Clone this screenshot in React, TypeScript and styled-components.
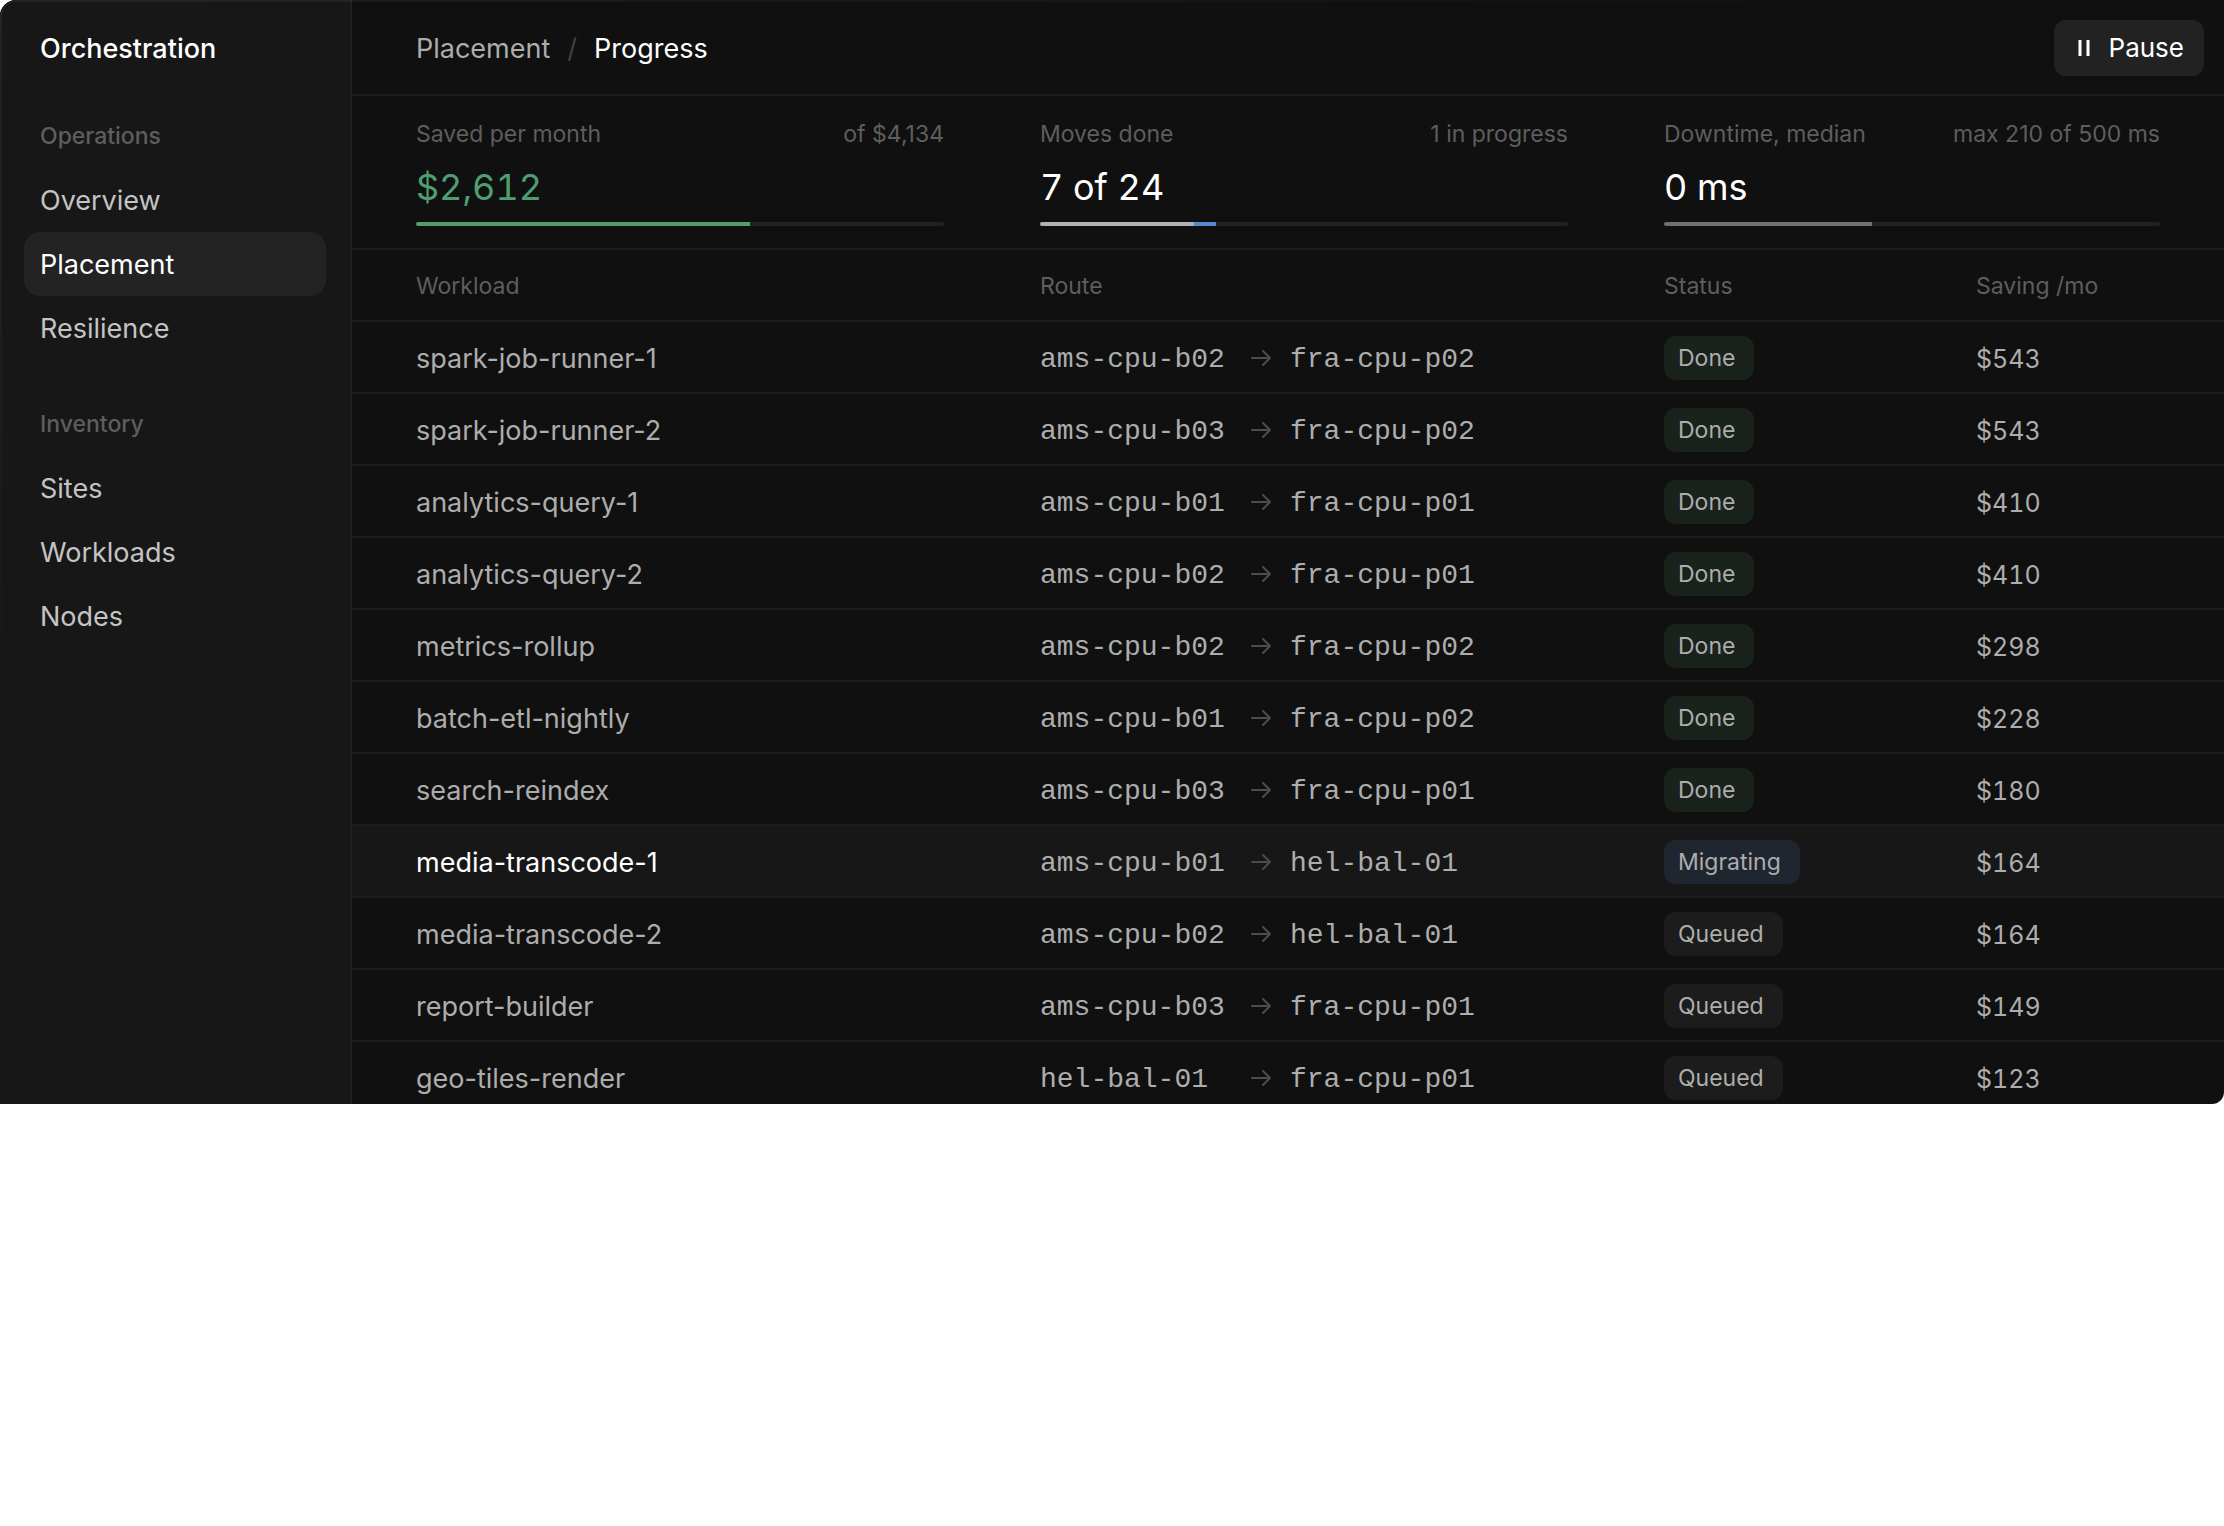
import React from "react";
import styled, { createGlobalStyle } from "styled-components";

const color = {
  main: "#101010",
  side: "#171717",
  raised: "#232323",
  line: "#1c1c1c",
  white: "#ffffff",
  nav: "#c4c4c4",
  text: "#adadad",
  muted: "#5e5e5e",
  green: "#4f9e70",
  blue: "#5b87d0",
};

const sans = `Inter, "Liberation Sans", sans-serif`;
const mono = `"Liberation Mono", monospace`;

const GlobalStyle = createGlobalStyle`
  *, *::before, *::after { box-sizing: border-box; }
  body { margin: 0; background: #ffffff; font-family: ${sans}; -webkit-font-smoothing: antialiased; }
`;

const Window = styled.div`
  position: relative;
  display: flex;
  height: 1104px;
  overflow: hidden;
  border-radius: 16px 0 12px 0;
  background: ${color.main};
  color: ${color.text};
  font-size: 27px;
  line-height: 32px;

  &::after {
    content: "";
    position: absolute;
    inset: 0;
    border-radius: inherit;
    border: 2px solid rgba(255, 255, 255, 0.06);
    mask-image: linear-gradient(160deg, #000, transparent 40%);
    pointer-events: none;
  }
`;

const Sidebar = styled.nav`
  flex: 0 0 352px;
  padding: 0 24px;
  background: ${color.side};
  border-right: 2px solid #1f1f1f;
`;

const Brand = styled.div`
  height: 96px;
  padding: 2px 16px 0;
  display: flex;
  align-items: center;
  color: ${color.white};
  font-weight: 500;
`;

const NavGroup = styled.section`
  padding: 8px 0 24px;
`;

const NavHeading = styled.h2`
  display: flex;
  align-items: center;
  height: 64px;
  margin: 0;
  padding: 0 16px;
  font-size: 23px;
  font-weight: 500;
  color: ${color.muted};
`;

const NavLink = styled.a<{ $active?: boolean }>`
  display: flex;
  align-items: center;
  height: 64px;
  padding: 2px 16px 0;
  border-radius: 16px;
  text-decoration: none;
  color: ${(p) => (p.$active ? color.white : color.nav)};
  background: ${(p) => (p.$active ? color.raised : "transparent")};
`;

const Main = styled.main`
  flex: 1;
  min-width: 0;
`;

const Header = styled.header`
  display: flex;
  align-items: center;
  justify-content: space-between;
  height: 96px;
  padding: 2px 20px 0 64px;
  border-bottom: 2px solid ${color.line};
`;

const Crumbs = styled.div`
  display: flex;
  gap: 17px;
  padding-top: 2px;
`;

const CrumbLink = styled.a`
  color: ${color.text};
  text-decoration: none;
`;

const Slash = styled.span`
  color: #404040;
`;

const Current = styled.span`
  color: ${color.white};
`;

const PauseButton = styled.button`
  display: flex;
  align-items: center;
  gap: 15px;
  height: 56px;
  padding: 0 20px;
  border: 0;
  border-radius: 12px;
  background: #222222;
  color: ${color.white};
  font: inherit;
  font-size: 26px;
`;

const Stats = styled.section`
  display: grid;
  grid-template-columns: repeat(3, 1fr);
  height: 154px;
  border-bottom: 2px solid ${color.line};
`;

const Stat = styled.div`
  padding: 24px 32px 0 64px;
  &:last-child {
    padding-right: 64px;
  }
`;

const StatLabels = styled.div`
  display: flex;
  justify-content: space-between;
  font-size: 23px;
  line-height: 28px;
  color: ${color.muted};
`;

const StatValue = styled.div<{ $tone: string }>`
  margin-top: 17px;
  font-size: 36px;
  line-height: 44px;
  font-variant-numeric: tabular-nums;
  color: ${(p) => p.$tone};
`;

const Track = styled.div`
  display: flex;
  height: 4px;
  margin-top: 13px;
  border-radius: 2px;
  overflow: hidden;
  background: #222222;
`;

const Segment = styled.div<{ $tone: string }>`
  background: ${(p) => p.$tone};
`;

const Table = styled.table`
  width: 100%;
  table-layout: fixed;
  border-collapse: separate;
  border-spacing: 0;
`;

const Th = styled.th<{ $span: number }>`
  width: calc(100% / 6 * ${(p) => p.$span});
  height: 72px;
  padding: 2px 0 0 64px;
  border-bottom: 2px solid ${color.line};
  text-align: left;
  font-size: 23px;
  font-weight: 400;
  color: ${color.muted};
`;

const Row = styled.tr<{ $current: boolean }>`
  background: ${(p) => (p.$current ? color.side : "transparent")};
  td:first-child {
    color: ${(p) => (p.$current ? color.white : color.text)};
  }
`;

const Td = styled.td`
  height: 72px;
  padding: 2px 0 0 64px;
  border-bottom: 2px solid ${color.line};
  white-space: nowrap;
`;

const TextTd = styled(Td)`
  padding-top: 4px;
`;

const AmountTd = styled(TextTd)`
  font-size: 25px;
  font-variant-numeric: tabular-nums;
`;

const Route = styled.div`
  display: grid;
  grid-template-columns: 210px 40px 1fr;
  align-items: center;
`;

const Node = styled.span`
  padding-top: 4px;
  font-family: ${mono};
  font-size: 28px;
`;

const Badge = styled.span<{ $tone: string }>`
  display: flex;
  align-items: center;
  width: fit-content;
  height: 44px;
  padding: 0 19px 0 14px;
  border-radius: 12px;
  font-size: 23px;
  background: ${(p) => p.$tone};
`;

const badgeTone: Record<string, string> = {
  Done: "#19231c",
  Migrating: "#202630",
  Queued: "#1c1c1c",
};

const nav = [
  { title: "Operations", items: ["Overview", "Placement", "Resilience"] },
  { title: "Inventory", items: ["Sites", "Workloads", "Nodes"] },
];

const stats = [
  {
    label: "Saved per month",
    note: "of $4,134",
    value: "$2,612",
    tone: color.green,
    segments: [{ share: 2612 / 4134, tone: color.green }],
  },
  {
    label: "Moves done",
    note: "1 in progress",
    value: "7 of 24",
    tone: color.white,
    segments: [
      { share: 7 / 24, tone: "#b0b0b0" },
      { share: 1 / 24, tone: color.blue },
    ],
  },
  {
    label: "Downtime, median",
    note: "max 210 of 500 ms",
    value: "0 ms",
    tone: color.white,
    segments: [{ share: 210 / 500, tone: "#707070" }],
  },
];

const moves = [
  ["spark-job-runner-1", "ams-cpu-b02", "fra-cpu-p02", "Done", "$543"],
  ["spark-job-runner-2", "ams-cpu-b03", "fra-cpu-p02", "Done", "$543"],
  ["analytics-query-1", "ams-cpu-b01", "fra-cpu-p01", "Done", "$410"],
  ["analytics-query-2", "ams-cpu-b02", "fra-cpu-p01", "Done", "$410"],
  ["metrics-rollup", "ams-cpu-b02", "fra-cpu-p02", "Done", "$298"],
  ["batch-etl-nightly", "ams-cpu-b01", "fra-cpu-p02", "Done", "$228"],
  ["search-reindex", "ams-cpu-b03", "fra-cpu-p01", "Done", "$180"],
  ["media-transcode-1", "ams-cpu-b01", "hel-bal-01", "Migrating", "$164"],
  ["media-transcode-2", "ams-cpu-b02", "hel-bal-01", "Queued", "$164"],
  ["report-builder", "ams-cpu-b03", "fra-cpu-p01", "Queued", "$149"],
  ["geo-tiles-render", "hel-bal-01", "fra-cpu-p01", "Queued", "$123"],
];

const PauseIcon = () => (
  <svg width="20" height="20" viewBox="0 0 20 20" fill="currentColor" aria-hidden="true">
    <rect x="4.5" y="2" width="3" height="16" />
    <rect x="12.5" y="2" width="3" height="16" />
  </svg>
);

const ArrowIcon = () => (
  <svg width="22" height="22" viewBox="0 0 22 22" fill="none" stroke="#4c4c4c" strokeWidth="2" strokeLinecap="round" strokeLinejoin="round" aria-hidden="true">
    <path d="M2 11h18M13 4l7 7-7 7" />
  </svg>
);

export default function App() {
  return (
    <>
      <GlobalStyle />
      <Window>
        <Sidebar>
          <Brand>Orchestration</Brand>
          {nav.map((group) => (
            <NavGroup key={group.title}>
              <NavHeading>{group.title}</NavHeading>
              {group.items.map((item) => (
                <NavLink key={item} href="#" $active={item === "Placement"}>
                  {item}
                </NavLink>
              ))}
            </NavGroup>
          ))}
        </Sidebar>
        <Main>
          <Header>
            <Crumbs>
              <CrumbLink href="#">Placement</CrumbLink>
              <Slash>/</Slash>
              <Current>Progress</Current>
            </Crumbs>
            <PauseButton type="button">
              <PauseIcon />
              Pause
            </PauseButton>
          </Header>
          <Stats>
            {stats.map((stat) => (
              <Stat key={stat.label}>
                <StatLabels>
                  <span>{stat.label}</span>
                  <span>{stat.note}</span>
                </StatLabels>
                <StatValue $tone={stat.tone}>{stat.value}</StatValue>
                <Track>
                  {stat.segments.map((s) => (
                    <Segment key={s.tone} $tone={s.tone} style={{ width: `${s.share * 100}%` }} />
                  ))}
                </Track>
              </Stat>
            ))}
          </Stats>
          <Table>
            <thead>
              <tr>
                <Th $span={2}>Workload</Th>
                <Th $span={2}>Route</Th>
                <Th $span={1}>Status</Th>
                <Th $span={1}>Saving /mo</Th>
              </tr>
            </thead>
            <tbody>
              {moves.map(([name, from, to, status, saving]) => (
                <Row key={name} $current={status === "Migrating"}>
                  <TextTd>{name}</TextTd>
                  <Td>
                    <Route>
                      <Node>{from}</Node>
                      <ArrowIcon />
                      <Node>{to}</Node>
                    </Route>
                  </Td>
                  <Td>
                    <Badge $tone={badgeTone[status]}>{status}</Badge>
                  </Td>
                  <AmountTd>{saving}</AmountTd>
                </Row>
              ))}
            </tbody>
          </Table>
        </Main>
      </Window>
    </>
  );
}
